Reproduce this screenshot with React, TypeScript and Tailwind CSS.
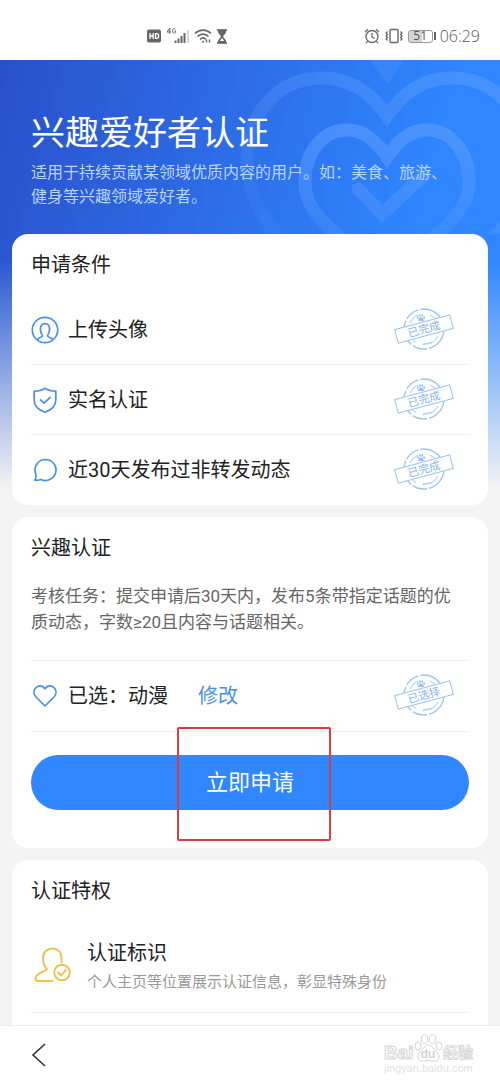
import type { ReactNode } from "react";

function StatusBar() {
  return (
    <header className="flex h-[60px] items-center justify-between bg-white pt-3 pr-5 text-[#666]">
      <div className="ml-[146px] flex items-center gap-1">
        <svg width="16" height="14" viewBox="0 0 16 14" aria-label="HD">
          <rect x="1" y="0.5" width="14" height="13" rx="2" fill="#666" />
          <path d="M4 4v6M7.2 4v6M4 7h3.2M9.5 4.6v4.8h1.2c1.3 0 2-1 2-2.4s-.7-2.4-2-2.4z" stroke="#fff" strokeWidth="1.3" fill="none" />
        </svg>
        <svg width="24" height="18" viewBox="0 0 24 18" fill="none" stroke="#666" aria-label="4G">
          <path d="M3.8 6.6V1L1 5h4M9.5 2.2C9 1.2 6.6 1 6.6 3.8s2.6 2.8 3 1.8V4H8.3" strokeWidth="1" />
          <path d="M9.5 16v-2.5M12.5 16v-4.5M15.5 16V9M18.5 16V6" strokeWidth="2" />
          <path d="M22 16V3" stroke="#ccc" strokeWidth="1.5" />
        </svg>
        <svg width="18" height="16" viewBox="0 0 18 16" fill="none" stroke="#666" strokeWidth="1.6" aria-label="Wi-Fi">
          <path d="M1 5.5C5.5 1 12.5 1 17 5.5M3.500 8.500c3.200-3.200 7.800-3.200 11 0M6 11.300c1.800-1.700 4.200-1.700 6 0" />
          <circle cx="9" cy="13.8" r="1" fill="#666" stroke="none" />
          <path d="M12.500 14.500l0-3M15.500 11.500v3" strokeWidth="1.4" />
        </svg>
        <svg width="12" height="15" viewBox="0 0 12 15" aria-label="hourglass">
          <path d="M1 1h10M1 14h10" stroke="#555" strokeWidth="1.6" />
          <path d="M2 1h8v2.500L7 7.500l3 4V14H2v-2.500l3-4-3-4z" fill="#666" />
          <path d="M6 9l2.200 3H3.800z" fill="#fff" />
        </svg>
      </div>
      <div className="flex items-center gap-1">
        <svg width="16" height="16" viewBox="0 0 16 16" fill="none" stroke="#666" strokeWidth="1.3" aria-label="alarm">
          <circle cx="8" cy="8.5" r="6" />
          <path d="M8 5v4l2.500 1.500M1 4l3-2.700M15 4l-3-2.700M3.500 13.500L2 15M12.500 13.500L14 15" />
        </svg>
        <svg width="20" height="16" viewBox="0 0 20 16" fill="none" stroke="#666" strokeWidth="1.4" aria-label="vibrate">
          <rect x="6" y="1.5" width="8" height="13" rx="1" />
          <path d="M3.500 3.500l-1.500 1.500 1.500 1.500L2 8l1.500 1.500L2 11l1.500 1.500M16.500 3.500L18 5l-1.500 1.500L18 8l-1.500 1.500L18 11l-1.500 1.500" strokeWidth="1.2" />
        </svg>
        <div className="flex items-center gap-px">
          <div className="flex h-[13px] w-[25px] items-center justify-center rounded-[3px] border border-[#999] bg-linear-to-r from-[#d4d4d4] from-55% to-white to-55% font-['Open_Sans',sans-serif] text-[12px] leading-none text-[#555]">51</div>
          <div className="h-2 w-[2px] bg-[#666]" />
        </div>
        <time className="font-['Open_Sans',sans-serif] text-[16px] font-light leading-5 text-[#555]">06:29</time>
      </div>
    </header>
  );
}

function HeartsBackdrop() {
  return (
    <svg className="absolute top-0 right-0" width="280" height="174" viewBox="220 0 280 174" fill="none" strokeWidth="13" aria-hidden="true">
      <defs>
        <linearGradient id="fade" gradientUnits="userSpaceOnUse" x1="440" y1="0" x2="300" y2="180">
          <stop offset="0" stopColor="#5c9cff" stopOpacity=".5" />
          <stop offset="1" stopColor="#5c9cff" stopOpacity=".12" />
        </linearGradient>
        <linearGradient id="inner" gradientUnits="userSpaceOnUse" x1="387" y1="60" x2="387" y2="190">
          <stop offset="0" stopColor="#5c9cff" stopOpacity=".65" />
          <stop offset="1" stopColor="#5c9cff" stopOpacity=".2" />
        </linearGradient>
      </defs>
      <path d="M370 0h34l-17 24z" fill="#5c9cff" fillOpacity=".25" />
      <path stroke="url(#fade)" d="M387 56C371 32 349 18 322 18C278 18 247 54 247 100C247 130 258 152 280 178L387 290L494 178C516 152 527 130 527 100C527 54 496 18 452 18C425 18 403 32 387 56Z" />
      <path stroke="url(#inner)" d="M387 97C376 80 363 70 347 70C322 70 305 93 305 122C305 146 320 160 341 178L387 222L433 178C454 160 469 146 469 122C469 93 452 70 427 70C411 70 398 80 387 97Z" />
      <path stroke="url(#inner)" strokeLinecap="round" d="M358 129L382 154L424 115" />
    </svg>
  );
}

function Paw() {
  return (
    <>
      <ellipse cx="-4.2" cy="0" rx="1.2" ry="1.6" />
      <ellipse cx="-1.6" cy="-2.8" rx="1.2" ry="1.7" />
      <ellipse cx="1.6" cy="-2.8" rx="1.2" ry="1.7" />
      <ellipse cx="4.2" cy="0" rx="1.2" ry="1.6" />
      <path d="M0 -.5C1.500-.5 2.200 1.200 3.200 2.200C4.300 3.500 3.500 5 1.800 4.600Q0 4.200-1.800 4.600C-3.500 5-4.300 3.500-3.200 2.200C-2.200 1.200-1.500-.5 0-.5Z" />
    </>
  );
}

function Stamp({ text }: { text: string }) {
  return (
    <svg className="mr-[14px] shrink-0" width="62" height="44" viewBox="0 0 62 44" fill="none" stroke="#9ac4f0" aria-label={text}>
      <circle cx="31" cy="21" r="20" strokeWidth="1.3" strokeDasharray="26 2 15 2" />
      <path d="M17 15A15.500 15.500 0 0 1 25 7M37 7A15.500 15.500 0 0 1 44 13M45 28A15.500 15.500 0 0 1 39 34.500M23 34.500A15.500 15.500 0 0 1 19 31" strokeWidth=".9" />
      <g transform="translate(28 9.5) scale(.75)" fill="#8fbdf0" stroke="none">
        <Paw />
      </g>
      <path d="M30 36.500l9-2" strokeWidth="1.6" strokeDasharray="2 .5" />
      <g transform="rotate(-15 31 21)">
        <rect x="2.5" y="14" width="57" height="14" fill="#fff" />
        <text x="31" y="25" textAnchor="middle" fill="#84b6ec" stroke="none" className="font-['Noto_Sans_CJK_SC',sans-serif] text-[11px]">{text}</text>
      </g>
    </svg>
  );
}

const iconProps = { width: 28, height: 28, viewBox: "0 0 28 28", fill: "none", stroke: "#4a90e8", strokeWidth: 1.7, strokeLinecap: "round", strokeLinejoin: "round", "aria-hidden": true } as const;

const AvatarIcon = () => (
  <svg {...iconProps}>
    <circle cx="14" cy="14" r="12.7" />
    <path d="M6.500 23.500C7.500 21.500 10.500 21.600 11.300 20.200C11.800 19 10 17.800 9.700 15.500C8.600 9.500 11 7.600 14 7.600S19.400 9.500 18.300 15.500C18 17.800 16.200 19 16.700 20.200C17.500 21.600 20.500 21.500 21.500 23.500" />
  </svg>
);
const ShieldIcon = () => (
  <svg {...iconProps}>
    <path d="M14 2.200C16.500 4.300 20 5.200 24.800 5.200V14C24.800 20 20.500 24 14 26.200C7.500 24 3.200 20 3.200 14V5.200C8 5.200 11.500 4.300 14 2.200ZM9.500 13.800l3.600 3.400 6-5.800" />
  </svg>
);
const ChatIcon = () => (
  <svg {...iconProps}>
    <path d="M14.500 3.500A10.500 10.500 0 1 1 9.800 23.400C8.500 24.200 6 24.500 3.800 24.200C4.900 22.900 5 21 4.900 18.200A10.500 10.500 0 0 1 14.500 3.500Z" />
  </svg>
);
const HeartIcon = () => (
  <svg {...iconProps}>
    <path d="M14 6.800C11.500 3 6.800 3.200 4.400 6.200C2.300 9 2.700 12.600 5 15L14 24L23 15C25.300 12.600 25.700 9 23.600 6.200C21.200 3.200 16.500 3 14 6.800Z" />
  </svg>
);

function Card({ title, className = "", children }: { title: string; className?: string; children: ReactNode }) {
  return (
    <section className={`mx-3 bg-white px-[19px] pt-4 ${className}`}>
      <h2 className="text-[20px] leading-[30px]">{title}</h2>
      {children}
    </section>
  );
}

const conditions = [
  { label: "上传头像", Icon: AvatarIcon },
  { label: "实名认证", Icon: ShieldIcon },
  { label: "近30天发布过非转发动态", Icon: ChatIcon },
];

function Watermark() {
  return (
    <svg width="92" height="48" viewBox="0 0 92 48" fill="#fff" stroke="#d4d4d4" aria-label="Baidu经验">
      <text x="0" y="28" strokeWidth="1" className="font-['Liberation_Sans',sans-serif] text-[19px] font-bold">Bai</text>
      <g strokeWidth="1">
        <ellipse cx="34" cy="15" rx="3" ry="4" />
        <ellipse cx="40.5" cy="8" rx="3.2" ry="4.5" />
        <ellipse cx="48.5" cy="8" rx="3.2" ry="4.5" />
        <ellipse cx="55" cy="15" rx="3" ry="4" />
        <path d="M44.500 14C48 14 50 18 53 21C57 25.500 55 31 49.500 30Q44.500 29 39.500 30C34 31 32 25.500 36 21C39 18 41 14 44.500 14Z" />
      </g>
      <text x="44" y="27" textAnchor="middle" fill="#d4d4d4" stroke="none" className="font-['Liberation_Sans',sans-serif] text-[12px] font-bold">du</text>
      <text x="59" y="27" strokeWidth=".8" className="font-['Noto_Sans_CJK_SC',sans-serif] text-[15px] font-bold">经验</text>
      <text x="0" y="41" fill="#e2e2e2" stroke="none" className="font-['Liberation_Sans',sans-serif] text-[11px]">jingyan.baidu.com</text>
    </svg>
  );
}

export default function App() {
  return (
    <div className="flex min-h-screen flex-col bg-[#f4f4f4] font-['Roboto','Noto_Sans_CJK_SC',sans-serif] text-[#222]">
      <StatusBar />
      <main className="flex-1 bg-[linear-gradient(180deg,rgba(244,244,244,0)_200px,#f4f4f4_430px),linear-gradient(105deg,#2a50cb,#2f86ff_75%)] [background-size:100%_440px] bg-no-repeat">
        <div className="relative h-[174px] px-[31px] pt-12 text-white">
          <HeartsBackdrop />
          <div className="relative">
            <h1 className="text-[34px] leading-[50px]">兴趣爱好者认证</h1>
            <p className="mt-[3px] pr-4 text-[16px] leading-6 text-[#b9d3fb]">适用于持续贡献某领域优质内容的用户。如：美食、旅游、健身等兴趣领域爱好者。</p>
          </div>
        </div>

        <Card title="申请条件" className="rounded-2xl">
          <ul className="mt-[15px] divide-y divide-[#efefef]">
            {conditions.map(({ label, Icon }) => (
              <li key={label} className="flex h-[70px] items-center text-[20px]">
                <Icon />
                <span className="ml-[9px] flex-1">{label}</span>
                <Stamp text="已完成" />
              </li>
            ))}
          </ul>
        </Card>

        <Card title="兴趣认证" className="mt-3 rounded-2xl pb-[38px]">
          <p className="mt-5 pr-3 text-[17px] leading-[26px] text-[#666]">考核任务：提交申请后30天内，发布5条带指定话题的优质动态，字数≥20且内容与话题相关。</p>
          <div className="mt-[25px] flex h-[72px] items-center border-y border-[#efefef] text-[20px]">
            <HeartIcon />
            <span className="ml-[9px]">已选：动漫</span>
            <a href="#edit" className="ml-[30px] flex-1 text-[#4a90e0]">修改</a>
            <Stamp text="已选择" />
          </div>
          <div className="relative mt-[23px]">
            <button type="button" className="h-[55px] w-full rounded-full bg-[#3187ff] text-[22px] text-white">立即申请</button>
            <div className="pointer-events-none absolute -top-7 left-1/3 h-[114px] w-[154px] rounded-[2px] border-2 border-[#d9403c]" />
          </div>
        </Card>

        <Card title="认证特权" className="mt-3 rounded-t-2xl pb-3">
          <div className="mt-8 flex items-center border-b border-[#efefef] pb-4">
            <svg width="40" height="40" viewBox="0 2 40 40" fill="none" stroke="#eec145" strokeWidth="1.9" strokeLinecap="round" strokeLinejoin="round" aria-hidden="true">
              <path d="M30.500 17V12.500C30.500 7 26.500 3.500 21.500 3.500S12 7 12 12.500C12 17 12.500 21 16 24C15 26.500 4.500 28 4.500 33.500C4.500 35.300 5.500 36 7 36H21.500" />
              <circle cx="31" cy="27.5" r="7.8" />
              <path d="M27.300 27.500l2.800 3 4.700-5.500" />
            </svg>
            <div className="ml-4">
              <h3 className="text-[20px] leading-[30px]">认证标识</h3>
              <p className="text-[15px] leading-7 text-[#999]">个人主页等位置展示认证信息，彰显特殊身份</p>
            </div>
          </div>
        </Card>
      </main>

      <nav className="flex h-[59px] items-center justify-between border-t border-[#ececec] bg-white pr-6 pl-7">
        <button type="button" aria-label="返回">
          <svg width="20" height="26" viewBox="0 0 20 26" fill="none" stroke="#333" strokeWidth="1.6">
            <path d="M17 2L5 13l12 11" />
          </svg>
        </button>
        <Watermark />
      </nav>
    </div>
  );
}
